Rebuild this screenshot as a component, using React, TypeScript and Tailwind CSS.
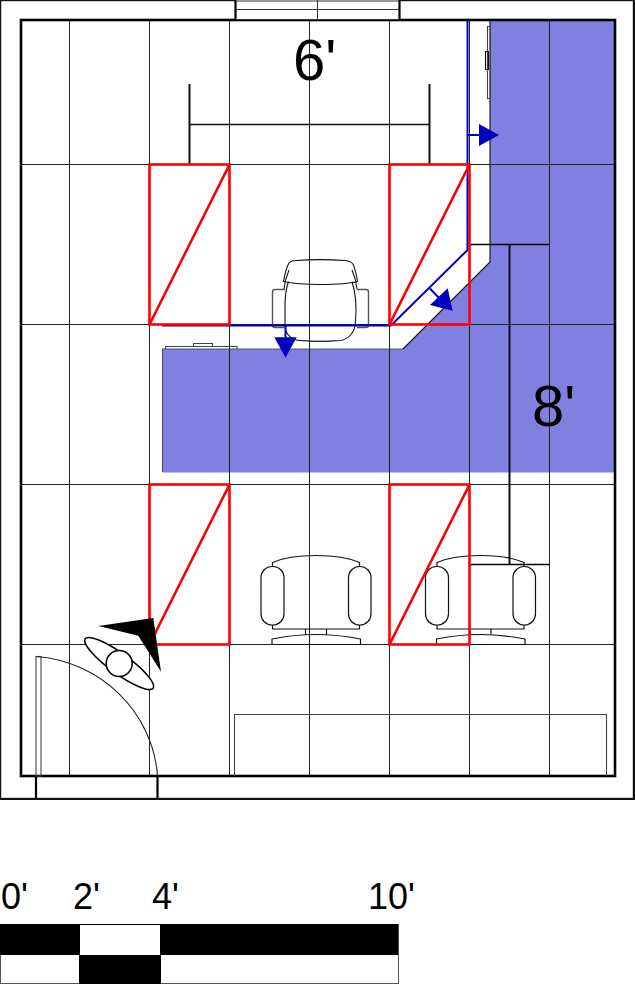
const GRID_X = [69.5, 149.5, 229.5, 309.5, 389.5, 469.5, 549.5];
const GRID_Y = [164.5, 324.5, 484.5, 644.5];
const RED = [
  [149.5, 164.5],
  [389.5, 164.5],
  [149.5, 484.5],
  [389.5, 484.5],
];

function VisitorChair({ dx }: { dx: number }) {
  return (
    <g transform={`translate(${dx} 0)`} fill="none" stroke="#111" strokeWidth="1.2">
      <rect x="261" y="566.5" width="23" height="58.5" rx="11" />
      <rect x="348.5" y="566.5" width="22.5" height="58.5" rx="11" />
      <path d="M272.5 566.5V562.5C285 557 300 555.5 316 555.5C332 555.5 347 557 359.5 562.5V566.5" />
      <path d="M272.5 625V629H359.5V625" />
      <path d="M305.5 629V634.5M326.5 629V634.5" />
      <path d="M272 639V644.5H360.5V639C340 635 325 634.5 316 634.5C307 634.5 292 635 272 639Z" />
    </g>
  );
}

function Plan() {
  return (
    <svg width="635" height="800" viewBox="0 0 635 800" className="block">
      <polygon points="490,20 615,20 615,472.5 162.5,472.5 162.5,349 403,349 490,262" fill="#8080e0" />
      <path d="M162.5 472V349H403" fill="none" stroke="#555" strokeWidth="1.2" />
      <path d="M403 349L490 262V20" fill="none" stroke="#111" strokeWidth="1.1" />

      {GRID_X.map((x) => (
        <line key={x} x1={x} y1="20" x2={x} y2="776" stroke="#222" strokeWidth="1" />
      ))}
      {GRID_Y.map((y) => (
        <line key={y} x1="21" y1={y} x2="615" y2={y} stroke="#222" strokeWidth="1" />
      ))}

      {/* Walls */}
      <rect x="0" y="0" width="634" height="799" fill="none" stroke="#111" strokeWidth="2.4" />
      <rect x="21" y="20" width="594" height="756" fill="none" stroke="#000" strokeWidth="2.6" />
      <rect x="236" y="0" width="163" height="19" fill="#fff" />
      <path d="M235.5 0V20M399.5 0V20" stroke="#000" strokeWidth="2.2" fill="none" />
      <path d="M236 1H399M236 9.5H399M236 19.5H399M317.5 0V20" stroke="#333" strokeWidth="1" fill="none" />
      <path d="M36 776V799M157.5 776V799" stroke="#000" strokeWidth="2.2" fill="none" />

      {/* Desk items */}
      <g fill="none" stroke="#444" strokeWidth="1.1">
        <rect x="487.5" y="26.5" width="3" height="72" />
        <rect x="485.5" y="51.5" width="3" height="18" stroke="#111" />
        <path d="M165.5 349V346.5H237V349" />
        <path d="M193.5 346V343.5H212.5V346" />
        <path d="M234.5 776V714.5H606.5V776" />
        <rect x="36" y="656.5" width="5" height="119.5" />
      </g>
      <path d="M36 656.5C100 661 153 712 157.5 776" fill="none" stroke="#222" strokeWidth="1.1" />

      {/* Desk chair */}
      <g fill="none" stroke="#111" strokeWidth="1.1">
        <path d="M283.5 281.5C285 273 287 267 288 265C289 261.5 292 260.5 296 260.5C310 259.5 330 259.5 345 260.5C350 261 352 262 353.5 265C355 270 357 276 357.5 281.5C352 283 335 284.5 320 284.5C305 284.5 290 283 283.5 281.5Z" />
        <path d="M288.5 281.5C285.5 290 285 298 285 306V327C286 335 292 340 300 340.5C312 341.5 328 341.5 340 340.5C348 339.5 355 333 355.5 322C356.5 310 356.5 295 352 281.5" />
        <path d="M284 289C284.5 284 286 277 289 270M357 289C356.5 284 355 277 352 270" />
        <path d="M285 289.5H275C273.5 289.5 272.5 290.5 272.5 292V325C272.5 326.5 273.5 327.5 275 327.5H284" stroke="#555" strokeWidth="1.4" />
        <path d="M357 289.5H366C367.5 289.5 368.5 290.5 368.5 292V325C368.5 326.5 367.5 327.5 366 327.5H357" stroke="#555" strokeWidth="1.4" />
      </g>
      <VisitorChair dx={0} />
      <VisitorChair dx={164.5} />

      {/* Dimension lines */}
      <path d="M189.5 84V164M429.5 84V164" stroke="#111" strokeWidth="2" fill="none" />
      <path d="M189.5 124.5H429.5" stroke="#111" strokeWidth="1.6" fill="none" />
      <path d="M469 244.5H550M469 564.5H550" stroke="#000" strokeWidth="1.6" fill="none" />
      <path d="M509.5 244.5V564.5" stroke="#111" strokeWidth="2" fill="none" />

      {/* View lines */}
      <g stroke="#0000c0" strokeWidth="2" fill="none">
        <path d="M467.5 20V250L391 325.5H162" />
        <path d="M468 135H480" />
        <path d="M430 288.5L439 298" />
        <path d="M285.5 326V338" />
      </g>
      <g fill="#0000c0">
        <polygon points="479,124 479,146 499,135" />
        <polygon points="447.7,288.3 430,305 452.7,310.7" />
        <polygon points="274.3,337.3 296.7,337.3 285.5,357.7" />
      </g>

      {/* Wall frames */}
      <g>
        {RED.map(([x, y]) => (
          <g key={`${x}-${y}`} fill="none" stroke="#ff0000" strokeWidth="2.6">
            <rect x={x} y={y} width="80" height="160" />
            <line x1={x} y1={y + 160} x2={x + 80} y2={y} />
          </g>
        ))}
      </g>

      {/* Person */}
      <g stroke="#000" strokeWidth="1.6">
        <ellipse cx="119.2" cy="663.5" rx="42" ry="10" transform="rotate(36 119.2 663.5)" fill="#fff" />
        <circle cx="119.2" cy="663.5" r="13" fill="#fff" />
      </g>
      <polygon points="98.3,626 153.3,618 161,671.7 138.3,635.7" fill="#000" />
    </svg>
  );
}

function ScaleBar() {
  return (
    <div className="border-r border-[#555] w-[399px] h-[60px] flex flex-col">
      <div className="flex h-[31px] border-t border-black">
        <div className="w-[80px] bg-black" />
        <div className="w-[80px] bg-white" />
        <div className="flex-1 bg-black" />
      </div>
      <div className="flex flex-1">
        <div className="w-[79px] bg-white border-l border-[#555] border-b" />
        <div className="w-[82px] bg-black" />
        <div className="flex-1 bg-white border-b border-[#555]" />
      </div>
    </div>
  );
}

export default function App() {
  return (
    <div className="relative w-[635px] h-[984px] bg-white text-black font-['Liberation_Sans',Arial,sans-serif] overflow-hidden">
      <Plan />
      <span className="absolute left-[293px] top-[27px] text-[58px] leading-[66px]">6'</span>
      <span className="absolute left-[532px] top-[373px] text-[58px] leading-[66px]">8'</span>
      <span className="absolute left-[1px] top-[877px] text-[36px] leading-[40px]">0'</span>
      <span className="absolute left-[73px] top-[877px] text-[36px] leading-[40px]">2'</span>
      <span className="absolute left-[152px] top-[877px] text-[36px] leading-[40px]">4'</span>
      <span className="absolute left-[368px] top-[877px] text-[36px] leading-[40px]">10'</span>
      <div className="mt-[124px]">
        <ScaleBar />
      </div>
    </div>
  );
}
